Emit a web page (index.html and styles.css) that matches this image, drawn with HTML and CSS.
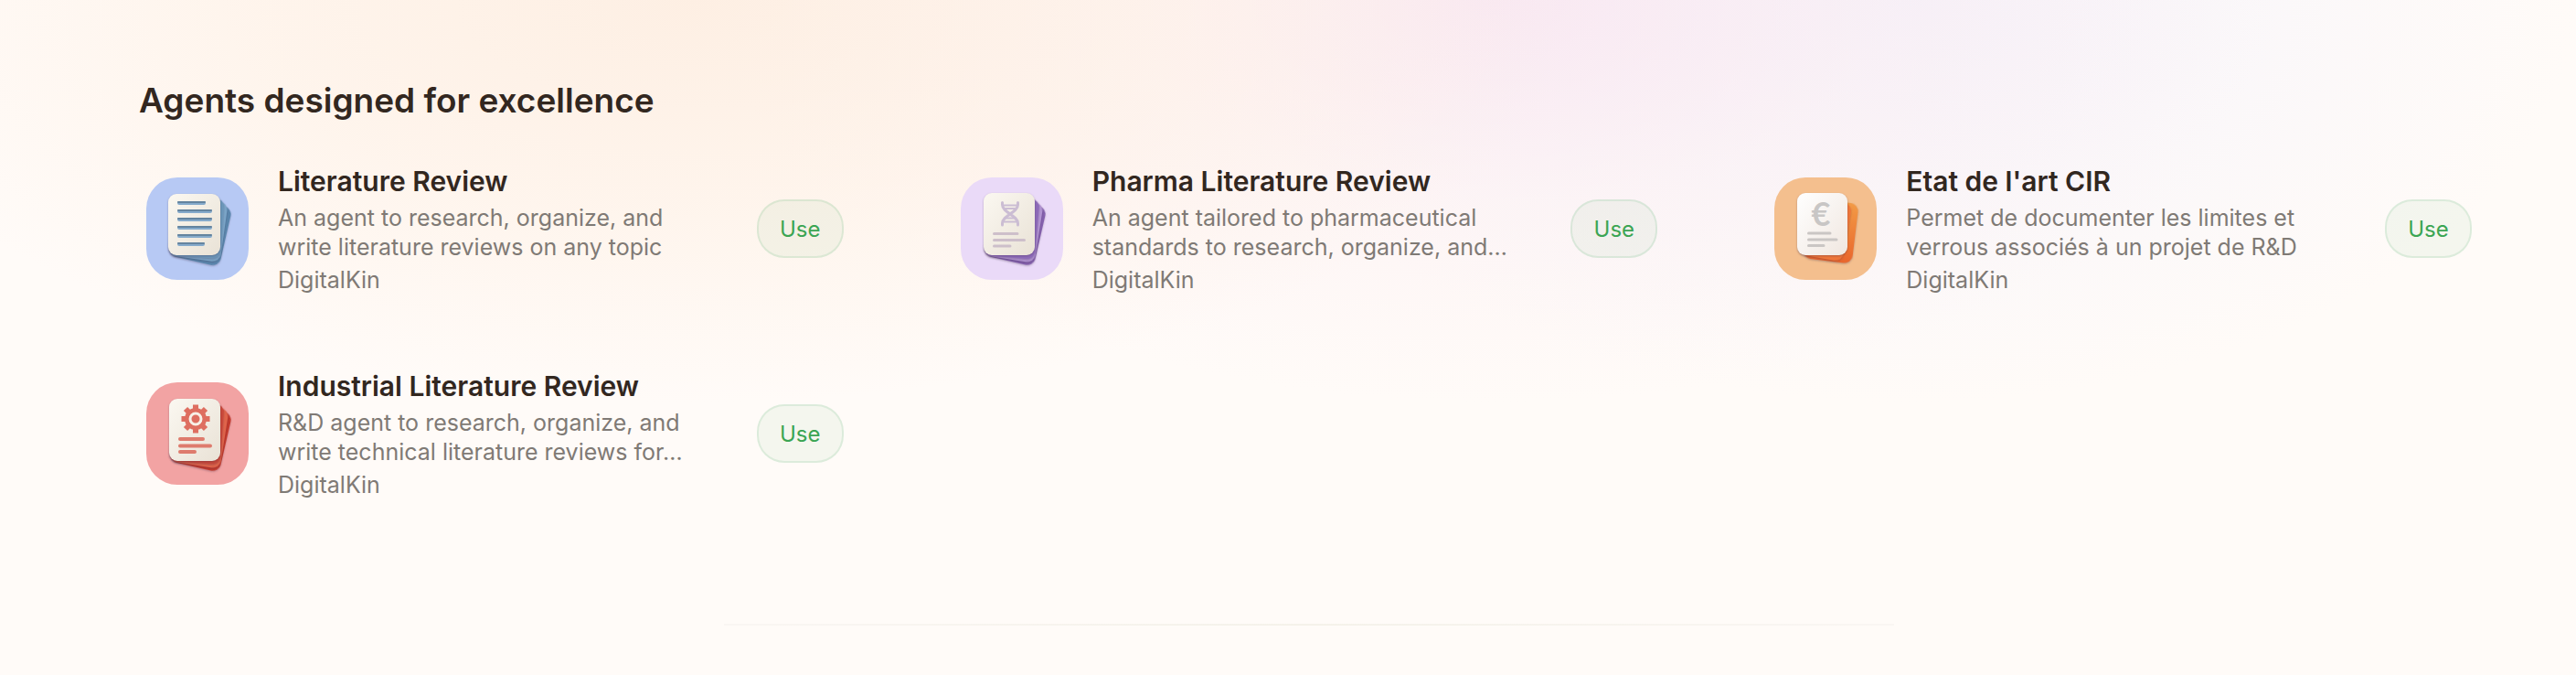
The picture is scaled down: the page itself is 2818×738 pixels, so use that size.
FILE: index.html
```
<!DOCTYPE html>
<html lang="en">
<head>
    <meta charset="UTF-8">
    <meta name="viewport" content="width=device-width, initial-scale=1.0">
    <link rel="stylesheet" href="styles.css">
    <title>Agents</title>
</head>
<body>
    <main class="page">
        <h2 class="page-heading">Agents designed for excellence</h2>

        <div class="agents">
            <article class="agent">
                <svg class="agent-icon blue" viewBox="0 0 112 112" aria-hidden="true">
                    <defs>
                        <linearGradient id="paper" x1="0" y1="0" x2="1" y2="1">
                            <stop offset="0" stop-color="#fbf8f1"/>
                            <stop offset="1" stop-color="#e9e2d6"/>
                        </linearGradient>
                        <linearGradient id="paper-white" x1="0" y1="0" x2="1" y2="1">
                            <stop offset="0" stop-color="#ffffff"/>
                            <stop offset="1" stop-color="#f0e7e0"/>
                        </linearGradient>
                        <linearGradient id="sheet-orange" x1="0" y1="0" x2="0" y2="1">
                            <stop offset="0" stop-color="#f29a45"/>
                            <stop offset="1" stop-color="#e9652c"/>
                        </linearGradient>
                    </defs>
                    <g class="sheets">
                        <rect x="24" y="19" width="57" height="66" rx="9" fill="#5a86ad" transform="rotate(13 24 85)"/>
                        <rect x="24" y="19" width="57" height="66" rx="9" fill="#7ba5c8" transform="rotate(8 24 85)"/>
                        <rect x="24" y="19" width="57" height="66" rx="9" fill="#6b96b9" transform="rotate(4 24 85)"/>
                        <rect x="24" y="18" width="57" height="67" rx="9" fill="url(#paper)"/>
                    </g>
                    <g stroke="#85aacb" stroke-width="4" stroke-linecap="round">
                        <path d="M36 28H63M36 37H70M36 46H70M36 55H70M36 64H70M36 73H62"/>
                    </g>
                    <path d="M35 27H64M35 36H71M35 45H71M35 54H71M35 63H71M35 72H63" stroke="#64849f" stroke-width="2" stroke-linecap="round"/>
                </svg>
                <div class="agent-text">
                    <h3 class="agent-name">Literature Review</h3>
                    <p class="agent-about">An agent to research, organize, and write literature reviews on any topic</p>
                    <p class="agent-author">DigitalKin</p>
                </div>
                <button class="use-button" type="button">Use</button>
            </article>

            <article class="agent">
                <svg class="agent-icon purple" viewBox="0 0 112 112" aria-hidden="true">
                    <g class="sheets">
                        <rect x="25" y="19" width="56" height="66" rx="9" fill="#8561ae" transform="rotate(13 25 85)"/>
                        <rect x="25" y="19" width="56" height="66" rx="9" fill="#b294d3" transform="rotate(9 25 85)"/>
                        <rect x="25" y="19" width="56" height="66" rx="9" fill="#8d6ab8" transform="rotate(5 25 85)"/>
                        <rect x="25" y="17" width="56" height="68" rx="9" fill="url(#paper)"/>
                    </g>
                    <!-- dna -->
                    <g fill="none" stroke="#cbbdd3" stroke-linecap="round">
                        <path d="M45.500 27.500V30C45.500 38 62.500 42 62.500 50V52M62.500 27.500V30C62.500 38 45.500 42 45.500 50V52" stroke-width="3"/>
                        <path d="M47 30.500H61M49 34H59M50 44.500H58M47 48.500H61" stroke-width="2"/>
                    </g>
                    <path d="M36.500 61.500H62M36.500 68.500H69.500M36.500 75H54" stroke="#cdbfca" stroke-width="3" stroke-linecap="round"/>
                </svg>
                <div class="agent-text">
                    <h3 class="agent-name">Pharma Literature Review</h3>
                    <p class="agent-about">An agent tailored to pharmaceutical standards to research, organize, and…</p>
                    <p class="agent-author">DigitalKin</p>
                </div>
                <button class="use-button" type="button">Use</button>
            </article>

            <article class="agent">
                <svg class="agent-icon orange" viewBox="0 0 112 112" aria-hidden="true">
                    <g class="sheets">
                        <rect x="31" y="22" width="54" height="66" rx="9" fill="url(#sheet-orange)" transform="rotate(7 31 88)"/>
                        <rect x="25" y="20" width="50" height="64" rx="9" fill="#ee763a" transform="rotate(10 27 84)"/>
                        <rect x="25" y="17" width="55" height="68" rx="9" fill="url(#paper-white)"/>
                    </g>
                    <text class="euro" x="51" y="53" text-anchor="middle">€</text>
                    <path d="M37.500 61H61M37.500 68H68M37.500 74.500H54" stroke="#cac6c4" stroke-width="3" stroke-linecap="round"/>
                </svg>
                <div class="agent-text">
                    <h3 class="agent-name">Etat de l'art CIR</h3>
                    <p class="agent-about">Permet de documenter les limites et verrous associés à un projet de R&amp;D</p>
                    <p class="agent-author">DigitalKin</p>
                </div>
                <button class="use-button" type="button">Use</button>
            </article>

            <article class="agent">
                <svg class="agent-icon red" viewBox="0 0 112 112" aria-hidden="true">
                    <g class="sheets">
                        <rect x="25" y="20" width="56" height="66" rx="9" fill="#c43a2c" transform="rotate(13 25 86)"/>
                        <rect x="25" y="20" width="56" height="66" rx="9" fill="#e0644a" transform="rotate(9 25 86)"/>
                        <rect x="25" y="20" width="56" height="66" rx="9" fill="#c9483a" transform="rotate(4 25 86)"/>
                        <rect x="25" y="18" width="56" height="68" rx="9" fill="url(#paper)"/>
                    </g>
                    <!-- gear -->
                    <g transform="translate(54 40)">
                        <g stroke="#de6e60" stroke-width="6">
                            <path d="M0 -15.500V15.500M-15.500 0H15.500M-11 -11L11 11M-11 11L11 -11"/>
                        </g>
                        <circle r="12" fill="#de6e60"/>
                        <circle r="6" fill="#de6e60" stroke="#f7f0e7" stroke-width="3"/>
                    </g>
                    <path d="M37 62H62M37 69.500H70M37 76H53" stroke="#de7b6d" stroke-width="4" stroke-linecap="round"/>
                </svg>
                <div class="agent-text">
                    <h3 class="agent-name">Industrial Literature Review</h3>
                    <p class="agent-about">R&amp;D agent to research, organize, and write technical literature reviews for…</p>
                    <p class="agent-author">DigitalKin</p>
                </div>
                <button class="use-button" type="button">Use</button>
            </article>
        </div>

        <hr class="divider">
    </main>
</body>
</html>
```
FILE: styles.css
```
*{
    box-sizing: border-box;
}

body{
    margin: 0;
    color: #32271f;
    background-color: #fffbf8;
    background-image:
        radial-gradient(ellipse 34% 440px at 27% 0, rgba(253, 236, 222, 0.8), rgba(254, 240, 228, 0.6) 50%, rgba(255, 251, 248, 0)),
        radial-gradient(ellipse 30% 440px at 58% 0, rgba(248, 228, 240, 0.8), rgba(251, 236, 241, 0.4) 50%, rgba(255, 251, 248, 0)),
        radial-gradient(ellipse 26% 440px at 74% 0, rgba(240, 237, 250, 0.7), rgba(246, 244, 251, 0.5) 50%, rgba(255, 251, 248, 0));
    background-repeat: no-repeat;
    font-family: "Inter", sans-serif;
}

h2, h3, p{
    margin: 0;
}

.page{
    padding: 88px 106px 54px 152px;
}

.page-heading{
    font-size: 37px;
    line-height: 44px;
    font-weight: 600;
}

.agents{
    display: grid;
    grid-template-columns: repeat(3, 1fr);
    column-gap: 112px;
    row-gap: 64px;
    margin-top: 38px;
}

.agent{
    display: flex;
    align-items: center;
    gap: 32px;
    min-height: 160px;
    padding: 0 8px;
}

.agent-icon{
    flex: none;
    width: 112px;
    height: 112px;
    border-radius: 34px;
}

.blue{
    background-color: #b7c9f4;
}

.purple{
    background-color: #eadaf8;
}

.orange{
    background-color: #f4bf8e;
}

.red{
    background-color: #f2a3a3;
}

.sheets rect{
    filter: drop-shadow(0 1px 1px rgba(50, 30, 60, 0.3));
}

.euro{
    font-family: "Lato", sans-serif;
    font-size: 36px;
    font-weight: 700;
    fill: #c8c6c5;
}

.agent-text{
    flex: 1;
    min-width: 0;
    max-width: 464px;
}

.agent-name{
    margin-bottom: 4px;
    font-size: 30px;
    line-height: 40px;
    font-weight: 600;
}

.agent-about, .agent-author{
    font-size: 25px;
    line-height: 32px;
    color: #7f7a75;
}

.agent-author{
    margin-top: 4px;
}

.use-button{
    flex: none;
    width: 95px;
    height: 64px;
    margin-left: auto;
    padding: 0;
    border: 2px solid rgba(60, 170, 90, 0.13);
    border-radius: 30px;
    background-color: rgba(60, 170, 90, 0.06);
    color: #3ba553;
    font-family: inherit;
    font-size: 24px;
    cursor: pointer;
}

.divider{
    width: 50%;
    height: 2px;
    margin: 128px auto 0;
    border: none;
    background-image: linear-gradient(to right, #faf6f3, #f5f2ea, #faf6f3);
}
```
